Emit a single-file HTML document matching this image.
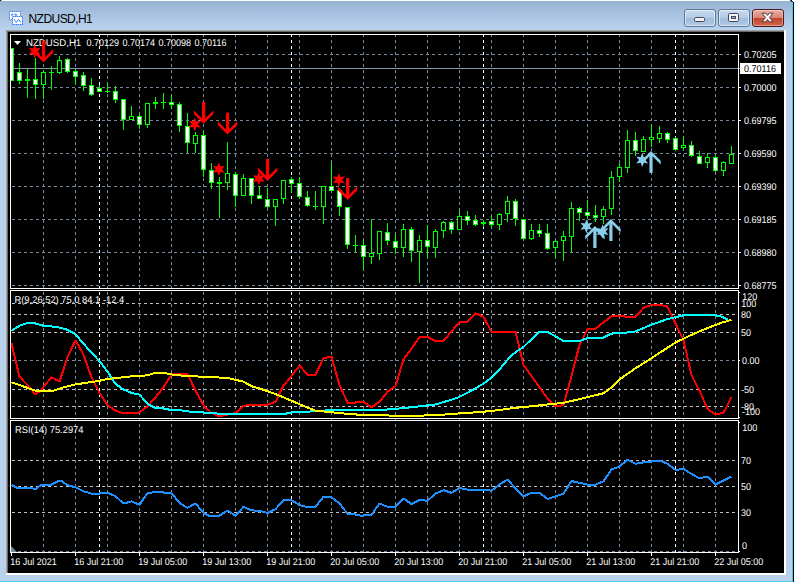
<!DOCTYPE html>
<html lang="en"><head><meta charset="utf-8"><title>NZDUSD,H1</title>
<style>
html,body{margin:0;padding:0;}
body{width:796px;height:582px;overflow:hidden;background:#b9d1ea;position:relative;font-family:"Liberation Sans",sans-serif;}
#win{position:absolute;left:0;top:0;width:796px;height:582px;overflow:hidden;}
#cap{position:absolute;left:0;top:1px;width:792px;height:29px;background:linear-gradient(#98b4d3,#b9d2ee);}
#topl{position:absolute;left:0;top:0;width:792px;height:1px;background:#fff;}
#title{position:absolute;left:28.5px;top:12px;font-size:12px;line-height:14px;letter-spacing:-0.55px;color:#000;white-space:pre;}
.btn{position:absolute;top:9px;width:32px;height:18px;box-sizing:border-box;border:1px solid #5f7896;border-radius:3px;
 background:linear-gradient(#c6d9ee 0%,#b4cbe6 48%,#9fbcdc 52%,#b0c9e5 100%);box-shadow:inset 0 0 0 1px rgba(255,255,255,.55);}
.btn.cl{border-color:#4b1a1c;background:linear-gradient(#e9b0a3 0%,#d98673 48%,#c3432b 52%,#cf6a4c 100%);box-shadow:inset 0 0 0 1px rgba(255,255,255,.35);}
svg{position:absolute;left:0;top:0;}
text{font-family:"Liberation Sans",sans-serif;font-size:9.8px;fill:#fff;text-rendering:geometricPrecision;}
</style></head><body><div id="win">
<div id="topl"></div><div id="cap"></div>
<div id="title">NZDUSD,H1</div>
<div class="btn" style="left:684px"></div><div class="btn" style="left:718px"></div><div class="btn cl" style="left:752px"></div>
<svg width="796" height="582" viewBox="0 0 796 582">
<defs>
<clipPath id="cp"><rect x="11" y="35" width="727" height="517"/></clipPath>
<clipPath id="cpm"><rect x="11" y="35" width="727" height="253"/></clipPath>
<clipPath id="cp2"><rect x="11" y="291" width="727" height="127"/></clipPath>
<clipPath id="cp3"><rect x="11" y="421" width="727" height="131"/></clipPath>
</defs>
<g shape-rendering="crispEdges">
<rect x="792" y="0" width="1" height="582" fill="#48cbf1"/>
<rect x="793" y="0" width="1" height="582" fill="#000"/>
<rect x="794" y="0" width="2" height="582" fill="#fff"/>
<rect x="0" y="581" width="793" height="1" fill="#48cbf1"/>
<rect x="6" y="30" width="780" height="545" fill="#fff"/>
<rect x="6" y="30" width="778" height="543" fill="#a0a0a0"/>
<rect x="7" y="31" width="777" height="542" fill="#696969"/>
<rect x="8" y="32" width="776" height="541" fill="#000"/>
</g>
<g shape-rendering="crispEdges" clip-path="url(#cp)" stroke-width="1" stroke-dasharray="3 3">
<line x1="43.5" y1="34" x2="43.5" y2="553" stroke="#778899"/>
<line x1="75.5" y1="34" x2="75.5" y2="553" stroke="#778899"/>
<line x1="107.5" y1="34" x2="107.5" y2="553" stroke="#778899"/>
<line x1="139.5" y1="34" x2="139.5" y2="553" stroke="#778899"/>
<line x1="171.5" y1="34" x2="171.5" y2="553" stroke="#778899"/>
<line x1="203.5" y1="34" x2="203.5" y2="553" stroke="#778899"/>
<line x1="235.5" y1="34" x2="235.5" y2="553" stroke="#778899"/>
<line x1="267.5" y1="34" x2="267.5" y2="553" stroke="#778899"/>
<line x1="299.5" y1="34" x2="299.5" y2="553" stroke="#778899"/>
<line x1="331.5" y1="34" x2="331.5" y2="553" stroke="#778899"/>
<line x1="363.5" y1="34" x2="363.5" y2="553" stroke="#778899"/>
<line x1="395.5" y1="34" x2="395.5" y2="553" stroke="#778899"/>
<line x1="427.5" y1="34" x2="427.5" y2="553" stroke="#778899"/>
<line x1="459.5" y1="34" x2="459.5" y2="553" stroke="#778899"/>
<line x1="491.5" y1="34" x2="491.5" y2="553" stroke="#778899"/>
<line x1="523.5" y1="34" x2="523.5" y2="553" stroke="#778899"/>
<line x1="555.5" y1="34" x2="555.5" y2="553" stroke="#778899"/>
<line x1="587.5" y1="34" x2="587.5" y2="553" stroke="#778899"/>
<line x1="619.5" y1="34" x2="619.5" y2="553" stroke="#778899"/>
<line x1="651.5" y1="34" x2="651.5" y2="553" stroke="#778899"/>
<line x1="683.5" y1="34" x2="683.5" y2="553" stroke="#778899"/>
<line x1="715.5" y1="34" x2="715.5" y2="553" stroke="#778899"/>
<line x1="99.5" y1="34" x2="99.5" y2="553" stroke="#fff"/>
<line x1="291.5" y1="34" x2="291.5" y2="553" stroke="#fff"/>
<line x1="483.5" y1="34" x2="483.5" y2="553" stroke="#fff"/>
<line x1="675.5" y1="34" x2="675.5" y2="553" stroke="#fff"/>
<line x1="12" y1="54.5" x2="738" y2="54.5" stroke="#778899"/>
<line x1="12" y1="87.5" x2="738" y2="87.5" stroke="#778899"/>
<line x1="12" y1="120.5" x2="738" y2="120.5" stroke="#778899"/>
<line x1="12" y1="153.5" x2="738" y2="153.5" stroke="#778899"/>
<line x1="12" y1="186.5" x2="738" y2="186.5" stroke="#778899"/>
<line x1="12" y1="219.5" x2="738" y2="219.5" stroke="#778899"/>
<line x1="12" y1="252.5" x2="738" y2="252.5" stroke="#778899"/>
<line x1="12" y1="285.5" x2="738" y2="285.5" stroke="#778899"/>
<line x1="12" y1="303.5" x2="738" y2="303.5" stroke="#c0c0c0"/>
<line x1="12" y1="314.5" x2="738" y2="314.5" stroke="#c0c0c0"/>
<line x1="12" y1="332.5" x2="738" y2="332.5" stroke="#c0c0c0"/>
<line x1="12" y1="389.5" x2="738" y2="389.5" stroke="#c0c0c0"/>
<line x1="12" y1="406.5" x2="738" y2="406.5" stroke="#c0c0c0"/>
<line x1="12" y1="360.5" x2="738" y2="360.5" stroke="#778899"/>
<line x1="12" y1="460.5" x2="738" y2="460.5" stroke="#c0c0c0"/>
<line x1="12" y1="486.5" x2="738" y2="486.5" stroke="#c0c0c0"/>
<line x1="12" y1="512.5" x2="738" y2="512.5" stroke="#c0c0c0"/>
<line x1="12" y1="551.5" x2="738" y2="551.5" stroke="#778899"/>
</g>
<rect x="11" y="68" width="729" height="1" fill="#8596a8" shape-rendering="crispEdges"/>
<g shape-rendering="crispEdges" clip-path="url(#cpm)">
<rect x="11" y="48" width="1" height="33" fill="#00ff00"/>
<rect x="9" y="48" width="5" height="33" fill="#00ff00"/>
<rect x="10" y="49" width="3" height="31" fill="#fff"/>
<rect x="19" y="63" width="1" height="21" fill="#00ff00"/>
<rect x="17" y="72" width="5" height="9" fill="#00ff00"/>
<rect x="18" y="73" width="3" height="7" fill="#fff"/>
<rect x="27" y="69" width="1" height="29" fill="#00ff00"/>
<rect x="25" y="79" width="5" height="2" fill="#00ff00"/>
<rect x="35" y="58" width="1" height="41" fill="#00ff00"/>
<rect x="33" y="79" width="5" height="6" fill="#00ff00"/>
<rect x="34" y="80" width="3" height="4" fill="#fff"/>
<rect x="43" y="70" width="1" height="29" fill="#00ff00"/>
<rect x="41" y="72" width="5" height="13" fill="#00ff00"/>
<rect x="42" y="73" width="3" height="11" fill="#000"/>
<rect x="51" y="66" width="1" height="24" fill="#00ff00"/>
<rect x="49" y="72" width="5" height="1" fill="#00ff00"/>
<rect x="59" y="56" width="1" height="18" fill="#00ff00"/>
<rect x="57" y="60" width="5" height="13" fill="#00ff00"/>
<rect x="58" y="61" width="3" height="11" fill="#000"/>
<rect x="67" y="58" width="1" height="15" fill="#00ff00"/>
<rect x="65" y="59" width="5" height="13" fill="#00ff00"/>
<rect x="66" y="60" width="3" height="11" fill="#fff"/>
<rect x="75" y="69" width="1" height="16" fill="#00ff00"/>
<rect x="73" y="71" width="5" height="6" fill="#00ff00"/>
<rect x="74" y="72" width="3" height="4" fill="#fff"/>
<rect x="83" y="72" width="1" height="19" fill="#00ff00"/>
<rect x="81" y="75" width="5" height="11" fill="#00ff00"/>
<rect x="82" y="76" width="3" height="9" fill="#fff"/>
<rect x="91" y="78" width="1" height="18" fill="#00ff00"/>
<rect x="89" y="85" width="5" height="10" fill="#00ff00"/>
<rect x="90" y="86" width="3" height="8" fill="#fff"/>
<rect x="99" y="85" width="1" height="7" fill="#00ff00"/>
<rect x="97" y="88" width="5" height="4" fill="#00ff00"/>
<rect x="98" y="89" width="3" height="2" fill="#fff"/>
<rect x="107" y="83" width="1" height="10" fill="#00ff00"/>
<rect x="105" y="91" width="5" height="1" fill="#00ff00"/>
<rect x="115" y="86" width="1" height="17" fill="#00ff00"/>
<rect x="113" y="91" width="5" height="9" fill="#00ff00"/>
<rect x="114" y="92" width="3" height="7" fill="#fff"/>
<rect x="123" y="99" width="1" height="31" fill="#00ff00"/>
<rect x="121" y="99" width="5" height="21" fill="#00ff00"/>
<rect x="122" y="100" width="3" height="19" fill="#fff"/>
<rect x="131" y="106" width="1" height="14" fill="#00ff00"/>
<rect x="129" y="116" width="5" height="4" fill="#00ff00"/>
<rect x="130" y="117" width="3" height="2" fill="#000"/>
<rect x="139" y="114" width="1" height="15" fill="#00ff00"/>
<rect x="137" y="116" width="5" height="9" fill="#00ff00"/>
<rect x="138" y="117" width="3" height="7" fill="#fff"/>
<rect x="147" y="103" width="1" height="25" fill="#00ff00"/>
<rect x="145" y="103" width="5" height="22" fill="#00ff00"/>
<rect x="146" y="104" width="3" height="20" fill="#000"/>
<rect x="155" y="97" width="1" height="12" fill="#00ff00"/>
<rect x="153" y="102" width="5" height="2" fill="#00ff00"/>
<rect x="163" y="93" width="1" height="16" fill="#00ff00"/>
<rect x="161" y="102" width="5" height="1" fill="#00ff00"/>
<rect x="171" y="94" width="1" height="15" fill="#00ff00"/>
<rect x="169" y="102" width="5" height="3" fill="#00ff00"/>
<rect x="170" y="103" width="3" height="1" fill="#fff"/>
<rect x="179" y="102" width="1" height="30" fill="#00ff00"/>
<rect x="177" y="104" width="5" height="22" fill="#00ff00"/>
<rect x="178" y="105" width="3" height="20" fill="#fff"/>
<rect x="187" y="113" width="1" height="40" fill="#00ff00"/>
<rect x="185" y="126" width="5" height="17" fill="#00ff00"/>
<rect x="186" y="127" width="3" height="15" fill="#fff"/>
<rect x="195" y="132" width="1" height="21" fill="#00ff00"/>
<rect x="193" y="135" width="5" height="9" fill="#00ff00"/>
<rect x="194" y="136" width="3" height="7" fill="#000"/>
<rect x="203" y="131" width="1" height="46" fill="#00ff00"/>
<rect x="201" y="135" width="5" height="35" fill="#00ff00"/>
<rect x="202" y="136" width="3" height="33" fill="#fff"/>
<rect x="211" y="163" width="1" height="26" fill="#00ff00"/>
<rect x="209" y="170" width="5" height="13" fill="#00ff00"/>
<rect x="210" y="171" width="3" height="11" fill="#fff"/>
<rect x="219" y="177" width="1" height="41" fill="#00ff00"/>
<rect x="217" y="182" width="5" height="2" fill="#00ff00"/>
<rect x="227" y="142" width="1" height="48" fill="#00ff00"/>
<rect x="225" y="173" width="5" height="10" fill="#00ff00"/>
<rect x="226" y="174" width="3" height="8" fill="#000"/>
<rect x="235" y="172" width="1" height="35" fill="#00ff00"/>
<rect x="233" y="174" width="5" height="22" fill="#00ff00"/>
<rect x="234" y="175" width="3" height="20" fill="#fff"/>
<rect x="243" y="174" width="1" height="22" fill="#00ff00"/>
<rect x="241" y="178" width="5" height="18" fill="#00ff00"/>
<rect x="242" y="179" width="3" height="16" fill="#000"/>
<rect x="251" y="178" width="1" height="26" fill="#00ff00"/>
<rect x="249" y="178" width="5" height="18" fill="#00ff00"/>
<rect x="250" y="179" width="3" height="16" fill="#fff"/>
<rect x="259" y="186" width="1" height="13" fill="#00ff00"/>
<rect x="257" y="195" width="5" height="4" fill="#00ff00"/>
<rect x="258" y="196" width="3" height="2" fill="#fff"/>
<rect x="267" y="188" width="1" height="21" fill="#00ff00"/>
<rect x="265" y="199" width="5" height="8" fill="#00ff00"/>
<rect x="266" y="200" width="3" height="6" fill="#fff"/>
<rect x="275" y="199" width="1" height="27" fill="#00ff00"/>
<rect x="273" y="199" width="5" height="8" fill="#00ff00"/>
<rect x="274" y="200" width="3" height="6" fill="#000"/>
<rect x="283" y="180" width="1" height="24" fill="#00ff00"/>
<rect x="281" y="180" width="5" height="19" fill="#00ff00"/>
<rect x="282" y="181" width="3" height="17" fill="#000"/>
<rect x="291" y="177" width="1" height="16" fill="#00ff00"/>
<rect x="289" y="179" width="5" height="5" fill="#00ff00"/>
<rect x="290" y="180" width="3" height="3" fill="#fff"/>
<rect x="299" y="177" width="1" height="22" fill="#00ff00"/>
<rect x="297" y="183" width="5" height="14" fill="#00ff00"/>
<rect x="298" y="184" width="3" height="12" fill="#fff"/>
<rect x="307" y="191" width="1" height="16" fill="#00ff00"/>
<rect x="305" y="197" width="5" height="9" fill="#00ff00"/>
<rect x="306" y="198" width="3" height="7" fill="#fff"/>
<rect x="315" y="191" width="1" height="19" fill="#00ff00"/>
<rect x="313" y="206" width="5" height="1" fill="#00ff00"/>
<rect x="323" y="186" width="1" height="38" fill="#00ff00"/>
<rect x="321" y="186" width="5" height="21" fill="#00ff00"/>
<rect x="322" y="187" width="3" height="19" fill="#000"/>
<rect x="331" y="163" width="1" height="28" fill="#00ff00"/>
<rect x="329" y="186" width="5" height="5" fill="#00ff00"/>
<rect x="330" y="187" width="3" height="3" fill="#fff"/>
<rect x="339" y="190" width="1" height="26" fill="#00ff00"/>
<rect x="337" y="190" width="5" height="17" fill="#00ff00"/>
<rect x="338" y="191" width="3" height="15" fill="#fff"/>
<rect x="347" y="207" width="1" height="42" fill="#00ff00"/>
<rect x="345" y="207" width="5" height="38" fill="#00ff00"/>
<rect x="346" y="208" width="3" height="36" fill="#fff"/>
<rect x="355" y="235" width="1" height="17" fill="#00ff00"/>
<rect x="353" y="245" width="5" height="1" fill="#00ff00"/>
<rect x="363" y="240" width="1" height="30" fill="#00ff00"/>
<rect x="361" y="245" width="5" height="12" fill="#00ff00"/>
<rect x="362" y="246" width="3" height="10" fill="#fff"/>
<rect x="371" y="219" width="1" height="45" fill="#00ff00"/>
<rect x="369" y="253" width="5" height="4" fill="#00ff00"/>
<rect x="370" y="254" width="3" height="2" fill="#000"/>
<rect x="379" y="231" width="1" height="29" fill="#00ff00"/>
<rect x="377" y="231" width="5" height="23" fill="#00ff00"/>
<rect x="378" y="232" width="3" height="21" fill="#000"/>
<rect x="387" y="223" width="1" height="22" fill="#00ff00"/>
<rect x="385" y="232" width="5" height="9" fill="#00ff00"/>
<rect x="386" y="233" width="3" height="7" fill="#fff"/>
<rect x="395" y="234" width="1" height="20" fill="#00ff00"/>
<rect x="393" y="241" width="5" height="7" fill="#00ff00"/>
<rect x="394" y="242" width="3" height="5" fill="#fff"/>
<rect x="403" y="224" width="1" height="33" fill="#00ff00"/>
<rect x="401" y="229" width="5" height="19" fill="#00ff00"/>
<rect x="402" y="230" width="3" height="17" fill="#000"/>
<rect x="411" y="227" width="1" height="35" fill="#00ff00"/>
<rect x="409" y="229" width="5" height="22" fill="#00ff00"/>
<rect x="410" y="230" width="3" height="20" fill="#fff"/>
<rect x="419" y="235" width="1" height="48" fill="#00ff00"/>
<rect x="417" y="240" width="5" height="12" fill="#00ff00"/>
<rect x="418" y="241" width="3" height="10" fill="#000"/>
<rect x="427" y="225" width="1" height="33" fill="#00ff00"/>
<rect x="425" y="240" width="5" height="7" fill="#00ff00"/>
<rect x="426" y="241" width="3" height="5" fill="#fff"/>
<rect x="435" y="229" width="1" height="29" fill="#00ff00"/>
<rect x="433" y="231" width="5" height="17" fill="#00ff00"/>
<rect x="434" y="232" width="3" height="15" fill="#000"/>
<rect x="443" y="221" width="1" height="17" fill="#00ff00"/>
<rect x="441" y="222" width="5" height="9" fill="#00ff00"/>
<rect x="442" y="223" width="3" height="7" fill="#000"/>
<rect x="451" y="221" width="1" height="13" fill="#00ff00"/>
<rect x="449" y="222" width="5" height="8" fill="#00ff00"/>
<rect x="450" y="223" width="3" height="6" fill="#fff"/>
<rect x="459" y="211" width="1" height="19" fill="#00ff00"/>
<rect x="457" y="216" width="5" height="14" fill="#00ff00"/>
<rect x="458" y="217" width="3" height="12" fill="#000"/>
<rect x="467" y="211" width="1" height="14" fill="#00ff00"/>
<rect x="465" y="216" width="5" height="5" fill="#00ff00"/>
<rect x="466" y="217" width="3" height="3" fill="#fff"/>
<rect x="475" y="215" width="1" height="11" fill="#00ff00"/>
<rect x="473" y="220" width="5" height="5" fill="#00ff00"/>
<rect x="474" y="221" width="3" height="3" fill="#fff"/>
<rect x="483" y="220" width="1" height="7" fill="#00ff00"/>
<rect x="481" y="222" width="5" height="2" fill="#00ff00"/>
<rect x="491" y="216" width="1" height="11" fill="#00ff00"/>
<rect x="489" y="221" width="5" height="4" fill="#00ff00"/>
<rect x="490" y="222" width="3" height="2" fill="#fff"/>
<rect x="499" y="213" width="1" height="17" fill="#00ff00"/>
<rect x="497" y="214" width="5" height="11" fill="#00ff00"/>
<rect x="498" y="215" width="3" height="9" fill="#000"/>
<rect x="507" y="196" width="1" height="26" fill="#00ff00"/>
<rect x="505" y="201" width="5" height="13" fill="#00ff00"/>
<rect x="506" y="202" width="3" height="11" fill="#000"/>
<rect x="515" y="199" width="1" height="27" fill="#00ff00"/>
<rect x="513" y="201" width="5" height="18" fill="#00ff00"/>
<rect x="514" y="202" width="3" height="16" fill="#fff"/>
<rect x="523" y="219" width="1" height="21" fill="#00ff00"/>
<rect x="521" y="219" width="5" height="20" fill="#00ff00"/>
<rect x="522" y="220" width="3" height="18" fill="#fff"/>
<rect x="531" y="224" width="1" height="16" fill="#00ff00"/>
<rect x="529" y="230" width="5" height="9" fill="#00ff00"/>
<rect x="530" y="231" width="3" height="7" fill="#000"/>
<rect x="539" y="224" width="1" height="13" fill="#00ff00"/>
<rect x="537" y="230" width="5" height="4" fill="#00ff00"/>
<rect x="538" y="231" width="3" height="2" fill="#fff"/>
<rect x="547" y="224" width="1" height="26" fill="#00ff00"/>
<rect x="545" y="233" width="5" height="16" fill="#00ff00"/>
<rect x="546" y="234" width="3" height="14" fill="#fff"/>
<rect x="555" y="240" width="1" height="18" fill="#00ff00"/>
<rect x="553" y="241" width="5" height="7" fill="#00ff00"/>
<rect x="554" y="242" width="3" height="5" fill="#000"/>
<rect x="563" y="231" width="1" height="30" fill="#00ff00"/>
<rect x="561" y="236" width="5" height="5" fill="#00ff00"/>
<rect x="562" y="237" width="3" height="3" fill="#000"/>
<rect x="571" y="202" width="1" height="50" fill="#00ff00"/>
<rect x="569" y="208" width="5" height="29" fill="#00ff00"/>
<rect x="570" y="209" width="3" height="27" fill="#000"/>
<rect x="579" y="207" width="1" height="14" fill="#00ff00"/>
<rect x="577" y="208" width="5" height="5" fill="#00ff00"/>
<rect x="578" y="209" width="3" height="3" fill="#fff"/>
<rect x="587" y="200" width="1" height="19" fill="#00ff00"/>
<rect x="585" y="212" width="5" height="4" fill="#00ff00"/>
<rect x="586" y="213" width="3" height="2" fill="#fff"/>
<rect x="595" y="205" width="1" height="17" fill="#00ff00"/>
<rect x="593" y="215" width="5" height="3" fill="#00ff00"/>
<rect x="594" y="216" width="3" height="1" fill="#fff"/>
<rect x="603" y="206" width="1" height="18" fill="#00ff00"/>
<rect x="601" y="209" width="5" height="8" fill="#00ff00"/>
<rect x="602" y="210" width="3" height="6" fill="#000"/>
<rect x="611" y="171" width="1" height="44" fill="#00ff00"/>
<rect x="609" y="177" width="5" height="32" fill="#00ff00"/>
<rect x="610" y="178" width="3" height="30" fill="#000"/>
<rect x="619" y="163" width="1" height="19" fill="#00ff00"/>
<rect x="617" y="167" width="5" height="10" fill="#00ff00"/>
<rect x="618" y="168" width="3" height="8" fill="#000"/>
<rect x="627" y="130" width="1" height="43" fill="#00ff00"/>
<rect x="625" y="140" width="5" height="28" fill="#00ff00"/>
<rect x="626" y="141" width="3" height="26" fill="#000"/>
<rect x="635" y="132" width="1" height="24" fill="#00ff00"/>
<rect x="633" y="140" width="5" height="11" fill="#00ff00"/>
<rect x="634" y="141" width="3" height="9" fill="#fff"/>
<rect x="643" y="136" width="1" height="16" fill="#00ff00"/>
<rect x="641" y="139" width="5" height="13" fill="#00ff00"/>
<rect x="642" y="140" width="3" height="11" fill="#000"/>
<rect x="651" y="124" width="1" height="23" fill="#00ff00"/>
<rect x="649" y="137" width="5" height="3" fill="#00ff00"/>
<rect x="650" y="138" width="3" height="1" fill="#000"/>
<rect x="659" y="126" width="1" height="17" fill="#00ff00"/>
<rect x="657" y="133" width="5" height="6" fill="#00ff00"/>
<rect x="658" y="134" width="3" height="4" fill="#000"/>
<rect x="667" y="132" width="1" height="11" fill="#00ff00"/>
<rect x="665" y="133" width="5" height="7" fill="#00ff00"/>
<rect x="666" y="134" width="3" height="5" fill="#fff"/>
<rect x="675" y="137" width="1" height="14" fill="#00ff00"/>
<rect x="673" y="138" width="5" height="12" fill="#00ff00"/>
<rect x="674" y="139" width="3" height="10" fill="#fff"/>
<rect x="683" y="136" width="1" height="14" fill="#00ff00"/>
<rect x="681" y="145" width="5" height="3" fill="#00ff00"/>
<rect x="682" y="146" width="3" height="1" fill="#000"/>
<rect x="691" y="141" width="1" height="16" fill="#00ff00"/>
<rect x="689" y="145" width="5" height="11" fill="#00ff00"/>
<rect x="690" y="146" width="3" height="9" fill="#fff"/>
<rect x="699" y="151" width="1" height="13" fill="#00ff00"/>
<rect x="697" y="156" width="5" height="8" fill="#00ff00"/>
<rect x="698" y="157" width="3" height="6" fill="#fff"/>
<rect x="707" y="153" width="1" height="15" fill="#00ff00"/>
<rect x="705" y="157" width="5" height="6" fill="#00ff00"/>
<rect x="706" y="158" width="3" height="4" fill="#000"/>
<rect x="715" y="156" width="1" height="16" fill="#00ff00"/>
<rect x="713" y="157" width="5" height="14" fill="#00ff00"/>
<rect x="714" y="158" width="3" height="12" fill="#fff"/>
<rect x="723" y="161" width="1" height="15" fill="#00ff00"/>
<rect x="721" y="162" width="5" height="9" fill="#00ff00"/>
<rect x="722" y="163" width="3" height="7" fill="#000"/>
<rect x="731" y="146" width="1" height="18" fill="#00ff00"/>
<rect x="729" y="154" width="5" height="10" fill="#00ff00"/>
<rect x="730" y="155" width="3" height="8" fill="#000"/>
</g>
<text transform="translate(26 46) scale(0.985 1)">NZDUSD,H1</text>
<text transform="translate(86.5 46) scale(0.92 1)">0.70129</text>
<text transform="translate(122.5 46) scale(0.92 1)">0.70174</text>
<text transform="translate(158.5 46) scale(0.92 1)">0.70098</text>
<text transform="translate(194.5 46) scale(0.92 1)">0.70116</text>
<g fill="#ff0000">
<g transform="translate(34.70 51.30)"><polygon points="0.00,-6.90 1.60,-2.77 5.98,-3.45 3.20,0.00 5.98,3.45 1.60,2.77 0.00,6.90 -1.60,2.77 -5.98,3.45 -3.20,0.00 -5.98,-3.45 -1.60,-2.77"/></g>
<g transform="translate(194.80 124.30)"><polygon points="0.00,-6.90 1.60,-2.77 5.98,-3.45 3.20,0.00 5.98,3.45 1.60,2.77 0.00,6.90 -1.60,2.77 -5.98,3.45 -3.20,0.00 -5.98,-3.45 -1.60,-2.77"/></g>
<g transform="translate(218.85 169.20)"><polygon points="0.00,-6.90 1.60,-2.77 5.98,-3.45 3.20,0.00 5.98,3.45 1.60,2.77 0.00,6.90 -1.60,2.77 -5.98,3.45 -3.20,0.00 -5.98,-3.45 -1.60,-2.77"/></g>
<g transform="translate(258.80 178.60)"><polygon points="0.00,-6.90 1.60,-2.77 5.98,-3.45 3.20,0.00 5.98,3.45 1.60,2.77 0.00,6.90 -1.60,2.77 -5.98,3.45 -3.20,0.00 -5.98,-3.45 -1.60,-2.77"/></g>
<g transform="translate(338.85 179.80)"><polygon points="0.00,-6.90 1.60,-2.77 5.98,-3.45 3.20,0.00 5.98,3.45 1.60,2.77 0.00,6.90 -1.60,2.77 -5.98,3.45 -3.20,0.00 -5.98,-3.45 -1.60,-2.77"/></g>
<g transform="translate(43.5 62.0)"><rect x="-1.6" y="-21.5" width="3.2" height="19.5"/><polygon points="-9.7,-13 -9.7,-9.3 0,0.4 9.7,-9.3 9.7,-13 0,-3.3"/></g>
<g transform="translate(203.6 123.4)"><rect x="-1.6" y="-21.5" width="3.2" height="19.5"/><polygon points="-9.7,-13 -9.7,-9.3 0,0.4 9.7,-9.3 9.7,-13 0,-3.3"/></g>
<g transform="translate(227.5 134.2)"><rect x="-1.6" y="-21.5" width="3.2" height="19.5"/><polygon points="-9.7,-13 -9.7,-9.3 0,0.4 9.7,-9.3 9.7,-13 0,-3.3"/></g>
<g transform="translate(267.5 180.5)"><rect x="-1.6" y="-21.5" width="3.2" height="19.5"/><polygon points="-9.7,-13 -9.7,-9.3 0,0.4 9.7,-9.3 9.7,-13 0,-3.3"/></g>
<g transform="translate(347.6 199.5)"><rect x="-1.6" y="-21.5" width="3.2" height="19.5"/><polygon points="-9.7,-13 -9.7,-9.3 0,0.4 9.7,-9.3 9.7,-13 0,-3.3"/></g>
</g>
<g fill="#87ceeb">
<g transform="translate(586.40 226.30)"><polygon points="0.00,-6.90 1.60,-2.77 5.98,-3.45 3.20,0.00 5.98,3.45 1.60,2.77 0.00,6.90 -1.60,2.77 -5.98,3.45 -3.20,0.00 -5.98,-3.45 -1.60,-2.77"/></g>
<g transform="translate(602.50 231.50)"><polygon points="0.00,-6.90 1.60,-2.77 5.98,-3.45 3.20,0.00 5.98,3.45 1.60,2.77 0.00,6.90 -1.60,2.77 -5.98,3.45 -3.20,0.00 -5.98,-3.45 -1.60,-2.77"/></g>
<g transform="translate(642.20 160.00)"><polygon points="0.00,-6.90 1.60,-2.77 5.98,-3.45 3.20,0.00 5.98,3.45 1.60,2.77 0.00,6.90 -1.60,2.77 -5.98,3.45 -3.20,0.00 -5.98,-3.45 -1.60,-2.77"/></g>
<g transform="translate(594.9 226.5) scale(1 -1)"><rect x="-1.6" y="-21.5" width="3.2" height="19.5"/><polygon points="-9.7,-13 -9.7,-9.3 0,0.4 9.7,-9.3 9.7,-13 0,-3.3"/></g>
<g transform="translate(610.9 219.5) scale(1 -1)"><rect x="-1.6" y="-21.5" width="3.2" height="19.5"/><polygon points="-9.7,-13 -9.7,-9.3 0,0.4 9.7,-9.3 9.7,-13 0,-3.3"/></g>
<g transform="translate(651.0 151.4) scale(1 -1)"><rect x="-1.6" y="-21.5" width="3.2" height="19.5"/><polygon points="-9.7,-13 -9.7,-9.3 0,0.4 9.7,-9.3 9.7,-13 0,-3.3"/></g>
</g>
<g shape-rendering="crispEdges" clip-path="url(#cp2)">
<polyline points="11.5,343.2 19.5,376.8 27.5,385.0 35.5,394.7 41.5,389.5 51.5,377.2 59.5,381.7 67.5,357.1 75.5,340.3 83.5,354.8 91.5,377.2 99.5,392.9 107.5,405.2 115.5,410.7 123.5,413.4 131.5,413.0 139.5,412.5 147.5,406.3 155.5,397.3 163.5,387.3 171.5,374.5 179.5,373.9 187.5,373.9 195.5,390.6 203.5,405.2 211.5,413.0 219.5,416.3 227.5,414.6 235.5,413.0 243.5,405.8 251.5,404.7 259.5,404.7 267.5,404.7 275.5,401.8 283.5,385.7 291.5,376.1 299.5,365.6 307.5,374.5 315.5,374.5 323.5,358.2 331.5,356.6 339.5,385.0 347.5,402.5 355.5,402.5 363.5,401.8 371.5,407.4 379.5,401.8 387.5,391.7 395.5,386.2 403.5,359.3 411.5,348.6 419.5,337.0 427.5,337.0 435.5,341.0 443.5,341.0 451.5,331.4 459.5,322.0 467.5,322.0 475.5,313.2 483.5,316.8 491.5,331.8 515.5,331.8 523.5,364.9 531.5,376.1 539.5,387.3 547.5,398.5 555.5,406.3 563.5,405.2 571.5,376.1 579.5,344.8 587.5,329.1 595.5,328.7 603.5,322.4 611.5,316.2 619.5,315.7 627.5,316.8 635.5,316.8 643.5,307.9 651.5,305.0 659.5,304.5 667.5,306.8 675.5,323.5 683.5,340.3 691.5,375.0 699.5,390.6 707.5,408.9 715.5,414.6 723.5,412.7 731.5,397.1" fill="none" stroke="#ff0000" stroke-width="2" stroke-linejoin="bevel" stroke-linecap="butt"/>
<polyline points="11.5,330.7 19.5,325.8 27.5,323.1 35.5,323.5 43.5,325.8 51.5,326.4 59.5,327.6 67.5,329.8 75.5,334.3 83.5,343.7 91.5,352.6 99.5,361.1 107.5,371.6 115.5,383.9 123.5,389.5 131.5,392.9 139.5,394.6 147.5,404.0 155.5,408.1 163.5,408.5 171.5,410.1 179.5,410.1 191.2,411.9 203.5,412.5 219.5,413.7 235.5,414.1 283.5,414.1 291.5,412.5 315.5,411.2 331.5,410.1 352.0,410.1 385.5,409.6 403.5,408.1 419.5,406.3 435.5,404.5 448.2,400.7 459.5,396.9 475.5,388.4 483.5,383.5 491.5,377.7 499.5,369.4 510.8,356.0 519.7,349.3 523.5,347.0 531.5,339.2 539.5,331.8 547.5,331.8 555.5,336.5 563.5,341.0 579.5,341.0 587.5,338.1 603.5,337.6 611.5,333.6 627.5,332.5 635.5,331.4 651.5,324.7 667.5,319.1 683.5,315.3 702.0,314.6 715.5,315.3 721.3,316.5 728.1,319.8" fill="none" stroke="#00ffff" stroke-width="2" stroke-linejoin="bevel" stroke-linecap="butt"/>
<polyline points="11.5,382.4 19.5,385.0 27.5,387.9 35.5,390.6 43.5,391.1 53.8,390.6 63.9,387.3 75.5,384.4 86.3,382.8 97.4,381.2 107.5,379.0 119.8,377.7 133.2,376.1 147.5,375.4 155.5,372.7 163.5,372.7 171.5,374.5 179.5,375.4 203.5,376.8 227.5,377.9 243.5,381.7 251.5,386.2 259.5,388.4 275.5,394.0 291.5,400.7 305.2,406.7 315.5,410.7 331.5,412.3 349.9,414.1 358.0,414.6 395.5,415.7 419.5,415.7 441.4,414.8 459.5,413.4 481.7,411.9 497.4,410.3 513.0,408.1 531.5,406.3 547.5,404.5 563.5,402.9 579.5,399.1 603.5,393.3 611.5,387.3 619.5,379.4 635.5,368.3 651.5,358.2 667.5,347.7 675.5,342.5 689.5,335.8 702.0,330.2 707.5,328.1 721.3,322.8 731.5,319.8" fill="none" stroke="#ffff00" stroke-width="2" stroke-linejoin="bevel" stroke-linecap="butt"/>
</g>
<g shape-rendering="crispEdges" clip-path="url(#cp3)">
<polyline points="11.5,485.1 16.9,487.8 30.4,487.8 35.5,489.1 41.5,484.6 51.5,484.6 59.5,480.6 61.7,481.1 67.5,485.1 75.5,487.3 83.5,491.3 91.5,493.6 99.5,493.6 101.9,492.5 107.5,492.5 115.5,496.3 123.5,503.6 131.5,501.4 139.5,504.8 147.5,492.9 155.5,492.2 163.5,491.8 163.5,492.9 171.5,492.9 179.5,503.0 187.5,507.9 195.5,503.4 203.5,513.0 209.1,515.7 219.5,515.7 227.5,510.4 235.5,515.7 243.5,506.8 251.5,510.4 259.5,510.8 267.5,513.0 275.5,509.2 283.5,500.1 291.5,500.1 299.5,505.2 307.5,507.0 315.5,507.0 323.5,496.7 331.5,497.4 339.5,503.4 347.5,513.7 352.0,513.7 360.9,515.7 371.5,514.6 379.5,503.6 387.5,506.8 395.5,506.8 403.5,498.5 411.5,504.1 419.5,500.1 427.5,500.7 435.5,493.6 443.5,490.2 451.5,492.9 459.5,488.0 467.5,489.6 483.5,489.6 491.5,490.7 499.5,484.6 507.5,479.5 515.5,488.4 523.5,496.3 531.5,492.9 539.5,492.9 547.5,498.9 555.5,496.3 563.5,493.6 571.5,481.1 579.5,482.8 587.5,484.6 595.5,484.6 603.5,481.3 611.5,469.4 619.5,466.5 627.5,459.8 635.5,463.8 643.5,462.3 651.5,461.6 659.5,460.5 667.5,463.8 675.5,469.9 683.5,469.0 691.5,473.9 699.5,478.4 707.5,476.5 715.5,484.5 723.5,480.5 731.5,476.5" fill="none" stroke="#1e90ff" stroke-width="2" stroke-linejoin="bevel" stroke-linecap="butt"/>
</g>
<g shape-rendering="crispEdges" fill="#fff">
<rect x="10" y="34" width="729" height="1"/><rect x="10" y="288" width="729" height="1"/>
<rect x="10" y="34" width="1" height="255"/><rect x="738" y="34" width="1" height="255"/>
<rect x="10" y="290" width="729" height="1"/><rect x="10" y="418" width="729" height="1"/>
<rect x="10" y="290" width="1" height="129"/><rect x="738" y="290" width="1" height="129"/>
<rect x="10" y="420" width="729" height="1"/><rect x="10" y="552" width="729" height="1"/>
<rect x="10" y="420" width="1" height="133"/><rect x="738" y="420" width="1" height="133"/>
<rect x="739" y="54" width="2" height="1"/>
<rect x="739" y="87" width="2" height="1"/>
<rect x="739" y="120" width="2" height="1"/>
<rect x="739" y="153" width="2" height="1"/>
<rect x="739" y="186" width="2" height="1"/>
<rect x="739" y="219" width="2" height="1"/>
<rect x="739" y="252" width="2" height="1"/>
<rect x="739" y="285" width="2" height="1"/>
<rect x="739" y="292" width="1" height="1"/>
<rect x="739" y="360" width="1" height="1"/>
<rect x="739" y="417" width="1" height="1"/>
<rect x="739" y="422" width="1" height="1"/>
<rect x="739" y="551" width="1" height="1"/>
<rect x="11" y="553" width="1" height="3"/>
<rect x="75" y="553" width="1" height="3"/>
<rect x="139" y="553" width="1" height="3"/>
<rect x="203" y="553" width="1" height="3"/>
<rect x="267" y="553" width="1" height="3"/>
<rect x="331" y="553" width="1" height="3"/>
<rect x="395" y="553" width="1" height="3"/>
<rect x="459" y="553" width="1" height="3"/>
<rect x="523" y="553" width="1" height="3"/>
<rect x="587" y="553" width="1" height="3"/>
<rect x="651" y="553" width="1" height="3"/>
<rect x="715" y="553" width="1" height="3"/>
<rect x="740" y="63" width="41" height="11"/>
</g>
<polygon points="11,546 11,552 17,552" fill="#778899"/>
<polygon points="14,41 21,41 17.5,45" fill="#fff"/>
<text transform="translate(744 58) scale(0.92 1)">0.70205</text>
<text transform="translate(744 91) scale(0.92 1)">0.70000</text>
<text transform="translate(744 124) scale(0.92 1)">0.69795</text>
<text transform="translate(744 157) scale(0.92 1)">0.69590</text>
<text transform="translate(744 190) scale(0.92 1)">0.69390</text>
<text transform="translate(744 223) scale(0.92 1)">0.69185</text>
<text transform="translate(744 256) scale(0.92 1)">0.68980</text>
<text transform="translate(744 289) scale(0.92 1)">0.68775</text>
<text transform="translate(744 72) scale(0.92 1)" style="fill:#000">0.70116</text>
<text transform="translate(14.5 303) scale(0.955 1)">R(9,26,52) 75.0 84.1 -12.4</text>
<text transform="translate(742.3 300) scale(0.92 1)">120</text>
<text transform="translate(741.3 307) scale(0.92 1)">100</text>
<text transform="translate(741 318) scale(0.92 1)">80</text>
<text transform="translate(741 336) scale(0.92 1)">50</text>
<text transform="translate(742 364) scale(0.92 1)">0.00</text>
<text transform="translate(741 393) scale(0.92 1)">-50</text>
<text transform="translate(741 410) scale(0.92 1)">-80</text>
<text transform="translate(742 415) scale(0.92 1)">-100</text>
<text transform="translate(15 432.5) scale(0.952 1)">RSI(14) 75.2974</text>
<text transform="translate(742.3 431) scale(0.92 1)">100</text>
<text transform="translate(741 464) scale(0.92 1)">70</text>
<text transform="translate(741 490) scale(0.92 1)">50</text>
<text transform="translate(741 516) scale(0.92 1)">30</text>
<text transform="translate(742 549) scale(0.92 1)">0</text>
<text transform="translate(10.2 565) scale(0.92 1)">16 Jul 2021</text>
<text transform="translate(74.2 565) scale(0.92 1)">16 Jul 21:00</text>
<text transform="translate(138.2 565) scale(0.92 1)">19 Jul 05:00</text>
<text transform="translate(202.2 565) scale(0.92 1)">19 Jul 13:00</text>
<text transform="translate(266.2 565) scale(0.92 1)">19 Jul 21:00</text>
<text transform="translate(330.2 565) scale(0.92 1)">20 Jul 05:00</text>
<text transform="translate(394.2 565) scale(0.92 1)">20 Jul 13:00</text>
<text transform="translate(458.2 565) scale(0.92 1)">20 Jul 21:00</text>
<text transform="translate(522.2 565) scale(0.92 1)">21 Jul 05:00</text>
<text transform="translate(586.2 565) scale(0.92 1)">21 Jul 13:00</text>
<text transform="translate(650.2 565) scale(0.92 1)">21 Jul 21:00</text>
<text transform="translate(714.2 565) scale(0.92 1)">22 Jul 05:00</text>
</svg>
<svg width="796" height="32" viewBox="0 0 796 32">
<g shape-rendering="crispEdges"><rect x="0" y="0" width="1" height="1" fill="#222"/><rect x="1" y="0" width="1" height="1" fill="#9aa"/><rect x="0" y="1" width="1" height="1" fill="#9aa"/>
<rect x="790" y="0" width="3" height="1" fill="#1a2a33"/><rect x="791" y="1" width="2" height="1" fill="#1a2a33"/><rect x="792" y="0" width="4" height="2" fill="#fff"/><rect x="792" y="1" width="1" height="1" fill="#1a2a33"/><rect x="793" y="0" width="3" height="2" fill="#fff"/></g>
<g shape-rendering="crispEdges">
<rect x="9.5" y="11.5" width="11" height="8" fill="#fff" stroke="#4a86ff" stroke-dasharray="1 1"/>
<rect x="9.5" y="11.5" width="11" height="8" fill="none" stroke="#5b93ff" stroke-opacity=".65"/>
<rect x="12.5" y="16.5" width="10" height="8" fill="#fff" stroke="#8db4f4"/>
<rect x="12.5" y="16.5" width="10" height="8" fill="none" stroke="#3f7cff" stroke-dasharray="1 1"/>
</g>
<path d="M11.2 15.4 L12.3 14.2 L13.2 15.4 M14.6 13.6 L16 15.4 L17.2 14.4" fill="none" stroke="#3f7cff" stroke-width="1.1"/>
<polyline points="14.2,19.2 16.4,22.5 18.5,19.3 20.6,22.4" fill="none" stroke="#3f7cff" stroke-width="1"/>
<rect x="694.5" y="17.5" width="10" height="4" rx="1.2" fill="#f4f4f4" stroke="#43465f"/>
<rect x="728.5" y="13.5" width="10" height="8" rx="1.2" fill="#f4f4f4" stroke="#43465f"/>
<rect x="731.5" y="16.5" width="4" height="2" fill="#9db7d8" stroke="#43465f" stroke-width="1"/>
<path d="M762 13.2 l3.7 0 l1.8 2.2 l1.8 -2.2 l3.7 0 l-3.6 4.3 l3.6 4.3 l-3.7 0 l-1.8 -2.2 l-1.8 2.2 l-3.7 0 l3.6 -4.3 z" fill="#fff" stroke="#4c3a44" stroke-width="1"/>
</svg>
</div></body></html>
